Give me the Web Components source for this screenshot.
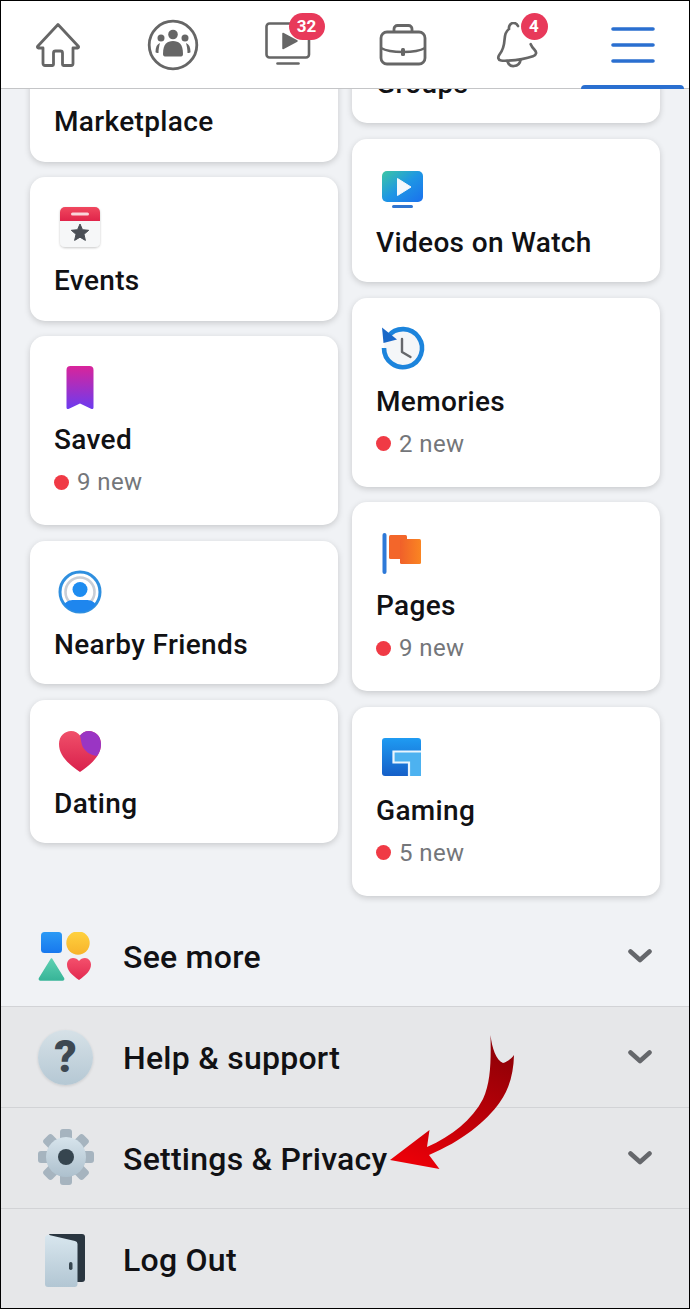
<!DOCTYPE html>
<html lang="en"><head><meta charset="utf-8"><title>Menu</title>
<style>
html,body{margin:0;padding:0;height:1309px;overflow:hidden;background:#f0f2f5;font-family:Roboto,"Liberation Sans",sans-serif}
</style></head><body>
<fb-app>
  <fb-nav slot="nav">
    <fb-tab>
      <svg viewBox="0 0 48 46" width="48" height="46"><path d="M3.500 24.500 24 2.500l20.500 22a1 1 0 0 1-1 1.500H39v15.500a2 2 0 0 1-2 2h-7.500a1 1 0 0 1-1-1V31a2 2 0 0 0-2-2h-5a2 2 0 0 0-2 2v11.500a1 1 0 0 1-1 1H11a2 2 0 0 1-2-2V26H4.500a1 1 0 0 1-1-1.500z" fill="none" stroke="#666" stroke-width="2.800" stroke-linejoin="round"/></svg>
    </fb-tab>
    <fb-tab>
      <svg viewBox="0 0 52 52" width="52" height="52"><circle cx="26" cy="26" r="23.800" fill="none" stroke="#666" stroke-width="2.800"/><circle cx="26" cy="15.500" r="4.800" fill="#666"/><circle cx="14" cy="19" r="3.500" fill="#666"/><circle cx="38" cy="19" r="3.500" fill="#666"/><path d="M16 35c0-10 4-13 10-13s10 3 10 13c0 2-1 2.500-3 2.500H19c-2 0-3-.5-3-2.500z" fill="#666"/><path d="M8.500 33c0-5 1.500-8 4.500-9-.8 3-1.500 6-1.500 10-1.500 0-3-.2-3-1zM43.500 33c0-5-1.500-8-4.500-9 .8 3 1.500 6 1.500 10 1.500 0 3-.2 3-1z" fill="#666"/></svg>
    </fb-tab>
    <fb-tab badge="32" bx="24" bw="36">
      <svg viewBox="0 0 46 46" width="46" height="46"><path d="M26 1.500H4.500a3 3 0 0 0-3 3v28a3 3 0 0 0 3 3H41a3 3 0 0 0 3-3V17" fill="none" stroke="#666" stroke-width="2.600" stroke-linecap="round"/><path d="M18 11.500 32 19 18 26.500z" fill="#666" stroke="#666" stroke-width="1.500" stroke-linejoin="round"/><path d="M12.500 41.500h21" stroke="#666" stroke-width="2.600" stroke-linecap="round"/></svg>
    </fb-tab>
    <fb-tab>
      <svg viewBox="0 0 48 42" width="48" height="42"><path d="M15 8V5a3.500 3.500 0 0 1 3.500-3.500h11A3.500 3.500 0 0 1 33 5v3" fill="none" stroke="#666" stroke-width="2.800"/><rect x="2" y="8" width="44" height="32" rx="6" fill="none" stroke="#666" stroke-width="2.800"/><path d="M2 24c6 3.500 14 4 22 4s16-.5 22-4" fill="none" stroke="#666" stroke-width="2.600"/><rect x="22" y="24" width="4" height="8" rx="1.500" fill="#666"/></svg>
    </fb-tab>
    <fb-tab badge="4" bx="25" bw="27">
      <svg viewBox="0 0 44 46" width="44" height="46"><path d="M13 7c-.5-3.500 2-6 4.500-6 2 0 3.500 1 4.500 3M13 7c-3 2-4.200 6-4.500 11-.3 5-1.500 10-5 14.500-2 2.800-1.500 5.500 1.500 6 2 .3 4 .3 6 .2 9-.5 19-2 26-4.500 3.500-1.200 4-4 1.500-6.500-2-2-3-3.500-3.800-5.500" fill="none" stroke="#666" stroke-width="2.700" stroke-linecap="round" stroke-linejoin="round"/><path d="M11.500 39.500c1 3 3.500 4.800 6.500 4.500 3.500-.3 6-2.500 6.500-6" fill="none" stroke="#666" stroke-width="2.700" stroke-linecap="round"/></svg>
    </fb-tab>
    <fb-tab active>
      <svg viewBox="0 0 44 36" width="44" height="36"><path d="M2 2h40M2 18h40M2 34h40" stroke="#2a6fd0" stroke-width="3.600" stroke-linecap="round"/></svg>
    </fb-tab>
  </fb-nav>

  <fb-grid slot="grid">
    <fb-column offset="-71">
      <fb-card title-text="Marketplace" tall="144"></fb-card>
      <fb-card title-text="Events">
        <svg slot="icon" viewBox="0 0 44 44" width="44" height="44" style="margin-left:5px"><defs><linearGradient id="ev" x1="0" y1="0" x2="0" y2="1"><stop offset="0" stop-color="#f0485f"/><stop offset="1" stop-color="#e0244a"/></linearGradient><filter id="evs" x="-20%" y="-20%" width="140%" height="140%"><feDropShadow dx="0" dy="1" stdDeviation="1.200" flood-opacity=".22"/></filter></defs><rect x="2" y="1" width="40" height="40" rx="5" fill="#f6f7f8" filter="url(#evs)"/><path d="M2 15V6a5 5 0 0 1 5-5h30a5 5 0 0 1 5 5v9z" fill="url(#ev)"/><rect x="13" y="6.500" width="18" height="3" rx="1.500" fill="#f9d5da"/><path d="M22 18l2.500 5.700 6.200.6-4.700 4 1.400 6.100-5.400-3.200-5.400 3.200 1.400-6.100-4.700-4 6.200-.6z" fill="#4b4f56" stroke="#4b4f56" stroke-linejoin="round"/></svg>
      </fb-card>
      <fb-card title-text="Saved" news="9 new">
        <svg slot="icon" viewBox="0 0 44 44" width="44" height="44" style="margin-left:0"><defs><linearGradient id="sv" x1="0" y1="0" x2="0" y2="1"><stop offset="0" stop-color="#d9249a"/><stop offset="1" stop-color="#6c3bf0"/></linearGradient></defs><path d="M13.500 5a4 4 0 0 1 4-4h19a4 4 0 0 1 4 4v37.500c0 1.500-1.200 2-2.500 1.300L27 38.500 16 43.800c-1.300.7-2.500.2-2.500-1.300z" fill="url(#sv)"/></svg>
      </fb-card>
      <fb-card title-text="Nearby Friends">
        <svg slot="icon" viewBox="0 0 44 44" width="44" height="44" style="margin-left:5px"><defs><clipPath id="nc"><circle cx="22" cy="22" r="20"/></clipPath></defs><circle cx="22" cy="22" r="20" fill="#fff" stroke="#2f8fdf" stroke-width="3"/><circle cx="22" cy="22" r="14.500" fill="none" stroke="#c9ced6" stroke-width="2.600"/><circle cx="22" cy="19.500" r="7.500" fill="#1e8cf0"/><path clip-path="url(#nc)" d="M6 44V35c2-4 6-5 10-5h12c4 0 8 1 10 5v9z" fill="#1e86ee"/></svg>
      </fb-card>
      <fb-card title-text="Dating">
        <svg slot="icon" viewBox="0 0 46 44" width="46" height="44" style="margin-left:4px"><defs><linearGradient id="dt" x1="0" y1="0" x2="0" y2="1"><stop offset="0" stop-color="#f0506a"/><stop offset="1" stop-color="#d9204c"/></linearGradient></defs><path d="M23 43C10 34 2 26 2 15 2 7 8 2 14 2c4 0 7 2 9 4.500C25 4 28 2 32 2c6 0 12 5 12 13 0 11-8 19-21 28z" fill="url(#dt)"/><path d="M23 6.500C25 4 28 2 32 2c6 0 12 5 12 13 0 4-1 8-4 12-7-1-13-5-15-11-1-3-1-6-2-9.500z" fill="#9a35c4"/></svg>
      </fb-card>
    </fb-column>
    <fb-column offset="-109.250">
      <fb-card title-text="Groups" tall="144"></fb-card>
      <fb-card title-text="Videos on Watch">
        <svg slot="icon" viewBox="0 0 44 44" width="44" height="44" style="margin-left:5px"><defs><linearGradient id="vd" x1="0" y1="0" x2="1" y2="1"><stop offset="0" stop-color="#3cc7a4"/><stop offset=".5" stop-color="#1e96e4"/><stop offset="1" stop-color="#1a70ee"/></linearGradient></defs><rect x="2" y="3" width="41" height="31" rx="5" fill="url(#vd)"/><path d="M17.500 10.500 31 19 17.500 27.500z" fill="#f4f8fc" stroke="#f4f8fc" stroke-linejoin="round"/><rect x="12" y="37" width="21" height="3" rx="1.500" fill="#2f74d0"/></svg>
      </fb-card>
      <fb-card title-text="Memories" news="2 new">
        <svg slot="icon" viewBox="0 2 44 44" width="44" height="44" style="margin-left:4px;overflow:visible"><circle cx="24" cy="23" r="19" fill="#f4f6f8"/><path d="M9 11.500A19 19 0 1 1 5 23" fill="none" stroke="#1c84dc" stroke-width="4.600"/><path d="M3 2.500l1.500 15.500L18 14.500z" fill="#1a68c8"/><path d="M23 14v13l8.500 5" fill="none" stroke="#65676b" stroke-width="2.400" stroke-linecap="round" stroke-linejoin="round"/></svg>
      </fb-card>
      <fb-card title-text="Pages" news="9 new">
        <svg slot="icon" viewBox="0 0 44 44" width="44" height="44" style="margin-left:5px"><defs><linearGradient id="pg" x1="0" y1="0" x2="1" y2="0"><stop offset="0" stop-color="#f0602a"/><stop offset="1" stop-color="#fa8522"/></linearGradient></defs><rect x="2.500" y="2" width="4" height="41" rx="2" fill="#2d79d8"/><rect x="9" y="4" width="18" height="24" rx="1.500" fill="#f3662a"/><rect x="20" y="8" width="21" height="25" rx="1.500" fill="url(#pg)"/></svg>
      </fb-card>
      <fb-card title-text="Gaming" news="5 new">
        <svg slot="icon" viewBox="0 0 44 44" width="44" height="44" style="margin-left:5px"><defs><linearGradient id="gm" x1="0" y1="0" x2="0" y2="1"><stop offset="0" stop-color="#1f9bf2"/><stop offset="1" stop-color="#155fc8"/></linearGradient></defs><rect x="2" y="2" width="39" height="38" rx="3" fill="url(#gm)"/><path d="M14 16h27v24H29V26H14z" fill="#4db2f0"/><path d="M41 15.500H13.500v11H29V40" fill="none" stroke="#eaf5fd" stroke-width="2.200"/></svg>
      </fb-card>
    </fb-column>
  </fb-grid>

  <fb-rows slot="rows">
    <fb-row tone="light" label="See more" chevron>
      <svg slot="icon" viewBox="0 0 56 52" width="56" height="52" style="margin-top:4px"><defs><linearGradient id="sq" x1="0" y1="0" x2="0" y2="1"><stop offset="0" stop-color="#2b9af5"/><stop offset="1" stop-color="#1878ee"/></linearGradient><linearGradient id="ci" x1="0" y1="0" x2="0" y2="1"><stop offset="0" stop-color="#ffd23f"/><stop offset="1" stop-color="#f7b32b"/></linearGradient><linearGradient id="tr" x1="0" y1="0" x2="0" y2="1"><stop offset="0" stop-color="#5ed0b2"/><stop offset="1" stop-color="#38b598"/></linearGradient><linearGradient id="he" x1="0" y1="0" x2="0" y2="1"><stop offset="0" stop-color="#f4506c"/><stop offset="1" stop-color="#e22a50"/></linearGradient></defs><rect x="5" y="0" width="21" height="21" rx="3.500" fill="url(#sq)"/><circle cx="42" cy="11" r="11.700" fill="url(#ci)"/><path d="M15.500 27 27.500 46.500a1 1 0 0 1-1 1.500H4.500a1 1 0 0 1-1-1.500z" fill="url(#tr)" stroke="url(#tr)" stroke-width="1.500" stroke-linejoin="round"/><path d="M43 48C36 43 31 38.500 31 32.500c0-3.500 2.500-6.500 6-6.500 2.500 0 4.500 1.200 6 3 1.500-1.800 3.500-3 6-3 3.500 0 6 3 6 6.500C55 38.500 50 43 43 48z" fill="url(#he)"/></svg>
    </fb-row>
    <fb-row tone="dark" label="Help &amp; support" chevron>
      <fb-help slot="icon"></fb-help>
    </fb-row>
    <fb-row tone="dark" label="Settings &amp; Privacy" chevron>
      <svg slot="icon" viewBox="0 0 60 60" width="60" height="60" style="margin-top:-2px"><defs><linearGradient id="gr" x1="0" y1="0" x2="0" y2="1"><stop offset="0" stop-color="#d7e4ec"/><stop offset="1" stop-color="#adc0cd"/></linearGradient></defs><g fill="#a6b4bf"><rect x="24" y="2" width="12" height="14" rx="3"/><rect x="24" y="44" width="12" height="14" rx="3"/><rect x="2" y="24" width="14" height="12" rx="3"/><rect x="44" y="24" width="14" height="12" rx="3"/><rect x="24" y="2" width="12" height="14" rx="3" transform="rotate(45 30 30)"/><rect x="24" y="44" width="12" height="14" rx="3" transform="rotate(45 30 30)"/><rect x="2" y="24" width="14" height="12" rx="3" transform="rotate(45 30 30)"/><rect x="44" y="24" width="14" height="12" rx="3" transform="rotate(45 30 30)"/></g><circle cx="30" cy="30" r="20" fill="url(#gr)"/><circle cx="30" cy="30" r="8" fill="#36454f"/></svg>
    </fb-row>
    <fb-row tone="dark" label="Log Out" last>
      <svg slot="icon" viewBox="0 0 60 60" width="60" height="60"><defs><linearGradient id="dr" x1="0" y1="0" x2="0" y2="1"><stop offset="0" stop-color="#d8e6ee"/><stop offset="1" stop-color="#b2c6d3"/></linearGradient></defs><path d="M13 5h33a3 3 0 0 1 3 3v42a3 3 0 0 1-3 3h-6z" fill="#2a3640"/><path d="M13 6 39 12a3 3 0 0 1 2.500 3V55a3 3 0 0 1-3 3H12a3 3 0 0 1-3-3V9a3 3 0 0 1 4-3z" fill="url(#dr)"/><rect x="33" y="33" width="3.500" height="8" rx="1.700" fill="#36454f"/></svg>
    </fb-row>
  </fb-rows>

  <svg slot="overlay" viewBox="0 0 690 1309" width="690" height="1309">
    <defs><linearGradient id="ar" x1="0.700" y1="0" x2="0.300" y2="1"><stop offset="0" stop-color="#8e0006"/><stop offset=".5" stop-color="#b80008"/><stop offset="1" stop-color="#ea0008"/></linearGradient></defs>
    <path d="M490.500 1035C492 1048 496 1060 503 1063 507 1062 511 1059 514 1055 513.500 1072 510 1088 500 1102 486 1122 462 1141 429 1155L439.500 1169 390 1160 429.500 1130 427 1147C452 1136 472 1120 483 1099 491 1082 491 1060 490.500 1035z" fill="url(#ar)"/>
  </svg>
</fb-app>

<script>
function def(name, html, init){
  customElements.define(name, class extends HTMLElement{
    constructor(){
      super();
      const r=this.attachShadow({mode:'open'});
      r.innerHTML=html;
      if(init) this._init=init;
    }
    connectedCallback(){ if(this._init) this._init(this, this.shadowRoot); }
  });
}
def('fb-app',`<style>
:host{display:flex;flex-direction:column;position:relative;box-sizing:border-box;width:690px;height:1309px;border:1px solid #000;background:#f0f2f5;overflow:hidden;color:#0b0b0d}
.ov{position:absolute;left:-1px;top:-1px;pointer-events:none}
</style><slot name="nav"></slot><slot name="grid"></slot><slot name="rows"></slot><div class="ov"><slot name="overlay"></slot></div>`);

def('fb-nav',`<style>
:host{display:flex;flex:none;position:relative;z-index:2;height:87px;margin-right:-1px;margin-left:-1px;background:#fff;border-bottom:1px solid #c4c5c7}
</style><slot></slot>`);

def('fb-tab',`<style>
:host{flex:1;display:flex;align-items:center;justify-content:center;position:relative}
.w{position:relative;display:flex}
.b{position:absolute;top:-9px;box-sizing:border-box;height:27px;border-radius:14px;background:#e8395a;color:#fff;font:700 17px/27px Roboto,sans-serif;text-align:center}
.u{position:absolute;left:6px;right:6px;bottom:-1px;height:4px;border-radius:4px 4px 0 0;background:#2a6fd0}
</style><div class="w"><slot></slot><span class="b" hidden></span></div><i class="u" hidden></i>`,(h,r)=>{
  const b=r.querySelector('.b');
  if(h.hasAttribute('badge')){b.hidden=false;b.textContent=h.getAttribute('badge');b.style.left=h.getAttribute('bx')+'px';b.style.width=h.getAttribute('bw')+'px';}else b.style.display='none';
  const u=r.querySelector('.u');
  if(h.hasAttribute('active'))u.hidden=false;else u.style.display='none';
});

def('fb-grid',`<style>
:host{flex:1;min-height:0;display:grid;grid-template-columns:308px 308px;column-gap:14px;padding:0 0 0 29px;overflow:hidden;align-items:start}
</style><slot></slot>`);

def('fb-column',`<style>
:host{display:flex;flex-direction:column;gap:15.500px}
</style><slot></slot>`,(h)=>{h.style.marginTop=h.getAttribute('offset')+'px';});

def('fb-card',`<style>
:host{display:block;box-sizing:border-box;background:#fff;border-radius:15px;box-shadow:0 2px 6px rgba(0,0,0,.17);padding:29px 0 0 24px;min-height:143.500px}
.i{display:block;height:44px;margin-left:-1px}
::slotted(svg){display:block}
.t{font:500 28px/32px Roboto,sans-serif;letter-spacing:.35px;margin-top:15px;color:#111114;white-space:nowrap}
.n{display:flex;align-items:center;gap:8px;margin-top:10px;padding-bottom:27px;font:400 24px/32px Roboto,sans-serif;letter-spacing:.4px;color:#74767a}
.d{width:15px;height:15px;border-radius:50%;background:#f03a45}
</style><div class="i"><slot name="icon"></slot></div><div class="t"></div><div class="n"><span class="d"></span><span class="x"></span></div>`,(h,r)=>{
  r.querySelector('.t').textContent=h.getAttribute('title-text');
  const n=h.getAttribute('news');
  if(n) r.querySelector('.x').textContent=n; else r.querySelector('.n').style.display='none';
});

def('fb-rows',`<style>:host{display:block;flex:none}</style><slot></slot>`);

def('fb-row',`<style>
:host{display:flex;align-items:center;box-sizing:border-box;height:101px;padding:0 37px 0 35px;border-top:1px solid #d2d3d6;gap:0}
.ic{width:87px;flex:none;display:flex}
.l{flex:1;font:500 32px/40px Roboto,sans-serif;letter-spacing:.25px;margin-top:2px;color:#111114;white-space:nowrap}
svg.c{flex:none;margin-top:-1px}
</style><div class="ic"><slot name="icon"></slot></div><div class="l"></div><svg class="c" viewBox="0 0 24 14" width="24" height="14"><path d="M2.500 2.500 12 11l9.500-8.500" fill="none" stroke="#65676b" stroke-width="4.600" stroke-linecap="round" stroke-linejoin="round"/></svg>`,(h,r)=>{
  r.querySelector('.l').textContent=h.getAttribute('label');
  if(!h.hasAttribute('chevron')) r.querySelector('.c').style.display='none';
  h.style.background=h.getAttribute('tone')==='light'?'#f0f2f5':'#e6e7e9';
  if(h.getAttribute('tone')==='light'){ h.style.borderTop='0'; r.querySelector('.c').style.marginTop='1px'; }
  if(h.hasAttribute('last')) h.style.height='100px';
});

def('fb-help',`<style>
:host{display:flex;align-items:center;justify-content:center;width:55px;height:55px;margin-left:2px;border-radius:50%;background:linear-gradient(#d6e1e7,#b5c8d4);box-shadow:0 1px 3px rgba(0,0,0,.12);font:900 44px/55px Roboto,sans-serif;color:#3d4852}
</style>?`);
</script>
</body></html>
